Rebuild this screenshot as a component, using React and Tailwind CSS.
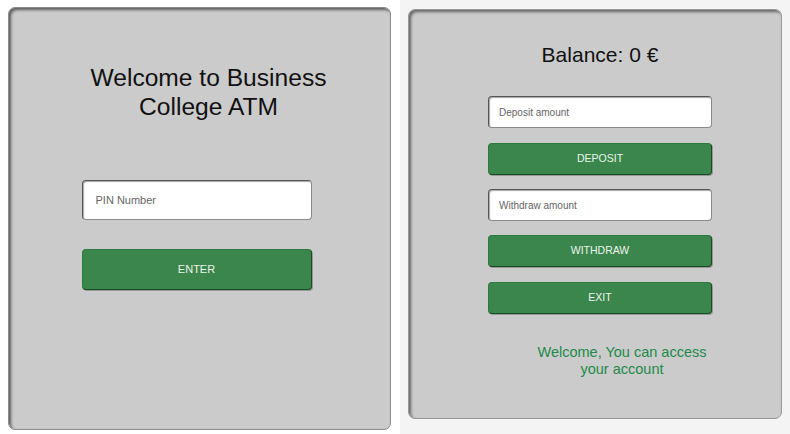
const font = { fontFamily: '"Liberation Sans", Arial, sans-serif' }

function Field({ placeholder, className }) {
  return (
    <input
      placeholder={placeholder}
      className={`bg-white rounded-[4px] border border-[#555] border-r-[#8a8a8a] border-b-[#8a8a8a] shadow-[inset_1px_1px_1px_rgba(0,0,0,0.35)] outline-none placeholder:text-[#666] ${className}`}
    />
  )
}

function Btn({ children, className }) {
  return (
    <button
      className={`bg-[#3a864c] text-[#eef5ee] rounded-[4px] border border-[#2d7a3e] border-r-[#174d22] border-b-[#174d22] shadow-[1px_1px_0_rgba(0,0,0,0.25)] uppercase ${className}`}
    >
      {children}
    </button>
  )
}

export default function App() {
  return (
    <div className="flex w-[790px] h-[434px] overflow-hidden" style={font}>
      <div className="w-[400px] h-full bg-white pl-[8px] pt-[7px]">
        <div className="w-[383px] h-[423px] bg-[#cbcbcb] rounded-[7px] border border-[#8c8c8c] shadow-[inset_2px_2px_3px_rgba(0,0,0,0.55)] flex flex-col items-center">
          <h1 className="mt-[55px] pl-[18px] text-[24.6px] leading-[29px] text-[#111] text-center">
            Welcome to Business<br />College ATM
          </h1>
          <Field placeholder="PIN Number" className="mt-[59px] -ml-[6px] w-[230px] h-[40px] pl-[13px] text-[11px]" />
          <Btn className="mt-[29px] -ml-[6px] w-[230px] h-[41px] text-[11px]">Enter</Btn>
        </div>
      </div>
      <div className="flex-1 h-full bg-[#f4f4f4] pl-[8px] pt-[9px]">
        <div className="w-[374px] h-[410px] bg-[#cbcbcb] rounded-[7px] border border-[#9a9a9a] shadow-[inset_2px_2px_3px_rgba(0,0,0,0.5)] flex flex-col items-center pl-[10px]">
          <div className="mt-[33px] text-[21px] leading-[24px] text-[#111]">Balance: 0 €</div>
          <Field placeholder="Deposit amount" className="mt-[29px] w-[224px] h-[32px] pl-[10px] text-[10px]" />
          <Btn className="mt-[15px] w-[224px] h-[32px] text-[10.5px]">Deposit</Btn>
          <Field placeholder="Withdraw amount" className="mt-[14px] w-[224px] h-[32px] pl-[10px] text-[10px]" />
          <Btn className="mt-[14px] w-[224px] h-[32px] text-[10.5px]">Withdraw</Btn>
          <Btn className="mt-[15px] w-[224px] h-[32px] text-[10.5px]">Exit</Btn>
          <p className="mt-[30px] pl-[44px] text-[14.5px] leading-[17px] text-[#1c8a4a] text-center">
            Welcome, You can access<br />your account
          </p>
        </div>
      </div>
    </div>
  )
}
